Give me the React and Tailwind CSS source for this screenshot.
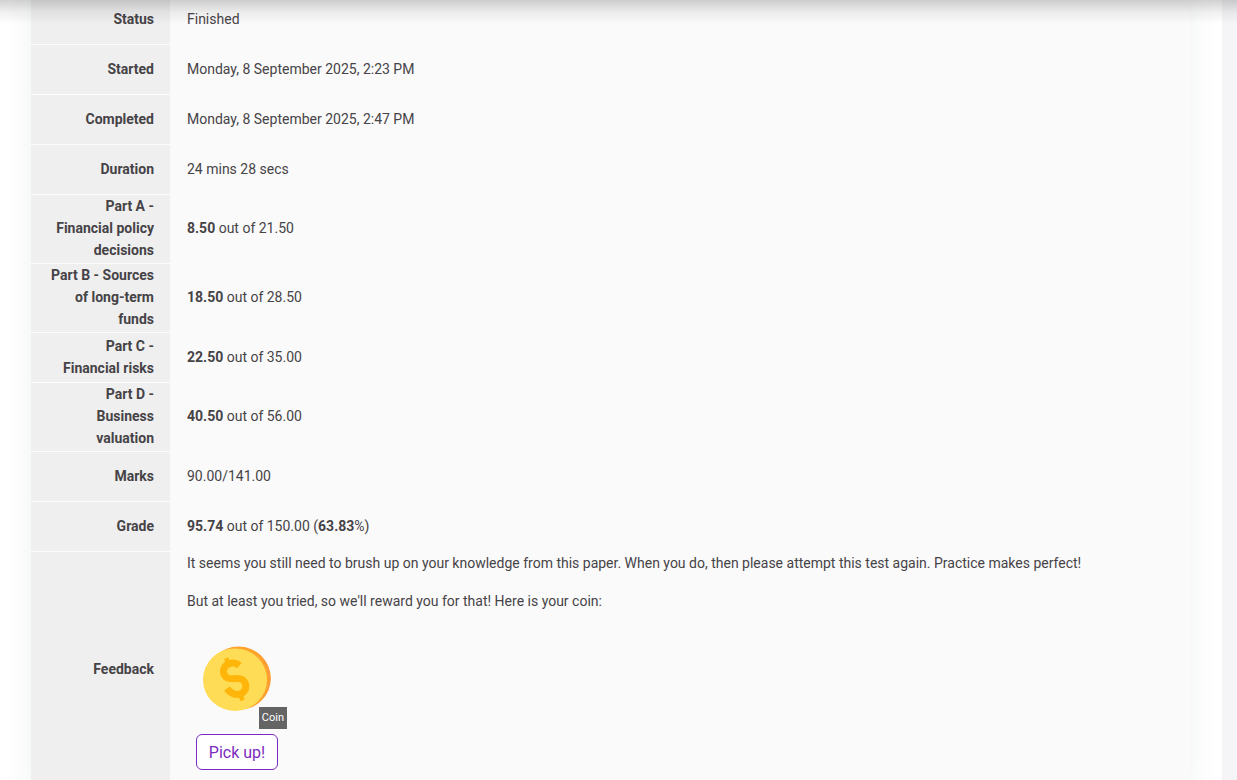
function Row({ label, children }) {
  return (
    <tr className="h-[50px]">
      <th
        scope="row"
        className="border-b border-[#fcfcfc] bg-[#efefef] pt-0 pr-4 pb-0.5 pl-4 text-right font-bold align-middle"
      >
        {label}
      </th>
      <td className="pt-0 pr-4 pb-[3px] pl-[17px] align-middle">{children}</td>
    </tr>
  );
}

function CoinIcon() {
  return (
    <svg viewBox="0 0 100 100" className="block size-full" role="img" aria-label="Gold coin">
      <ellipse cx="51.5" cy="49.3" rx="32.3" ry="31.7" fill="#ffa32b" />
      <path d="M68 22a32 32 0 0 1 7 49A36 36 0 0 0 68 22Z" fill="#fb9a3c" />
      <ellipse cx="48" cy="50.7" rx="32" ry="31.3" fill="#ffdc55" />
      <g fill="none" stroke="#ffb50a">
        <path
          d="M52.500 36.500C48.500 33 42.500 33 39 36.500C35.500 40 35.600 46 40 48.700C44.500 51.300 51 47.700 55.500 50.700C60 54 59.700 60.500 56 63.500C51.500 67 44.500 66 40 59.500"
          strokeWidth="7"
        />
        <path d="M39.300 29.200L41.500 36M52.900 64.500L55.600 71.300" strokeWidth="4.6" />
      </g>
    </svg>
  );
}

export default function App() {
  return (
    <div className="relative flex h-screen overflow-hidden bg-[#f5f5f8] font-['Roboto',sans-serif] text-sm leading-[22px] text-[#464347]">
      <main className="min-w-0 flex-1 bg-white pr-8 pl-[31px]">
        <table className="-mt-[5px] w-full table-fixed border-separate border-spacing-0 bg-[#fafafa] shadow-[0_0_28px_rgba(30,70,60,0.07)]">
          <colgroup>
            <col className="w-[139px]" />
            <col />
          </colgroup>
          <tbody>
            <Row label="Status">Finished</Row>
            <Row label="Started">Monday, 8 September 2025, 2:23 PM</Row>
            <Row label="Completed">Monday, 8 September 2025, 2:47 PM</Row>
            <Row label="Duration">24 mins 28 secs</Row>
            <Row label="Part A - Financial policy decisions">
              <b>8.50</b> out of 21.50
            </Row>
            <Row label="Part B - Sources of long-term funds">
              <b>18.50</b> out of 28.50
            </Row>
            <Row label="Part C - Financial risks">
              <b>22.50</b> out of 35.00
            </Row>
            <Row label="Part D - Business valuation">
              <b>40.50</b> out of 56.00
            </Row>
            <Row label="Marks">90.00/141.00</Row>
            <Row label="Grade">
              <b>95.74</b> out of 150.00 (<b>63.83</b>%)
            </Row>
            <Row label="Feedback">
              <p className="mb-4">
                It seems you still need to brush up on your knowledge from this paper. When you do, then please attempt this test again. Practice makes perfect!
              </p>
              <p>But at least you tried, so we'll reward you for that! Here is your coin:</p>
              <div className="mt-[17px] mb-4 flex w-[100px] flex-col items-center gap-[5px]">
                <div className="relative size-[100px]">
                  <CoinIcon />
                  <span className="absolute right-0 bottom-0 bg-[#646464] px-[3px] text-[11px] text-white">Coin</span>
                </div>
                <button
                  type="button"
                  className="h-9 rounded-md border border-[#7b2cbf] bg-white px-3 pt-0.5 text-base whitespace-nowrap text-[#7b2cbf]"
                >
                  Pick up!
                </button>
              </div>
            </Row>
          </tbody>
        </table>
      </main>
      <div className="w-[15px]" />
      <div className="pointer-events-none absolute inset-x-0 top-0 h-6 bg-linear-to-b from-black/18 via-black/6 to-transparent" />
    </div>
  );
}
